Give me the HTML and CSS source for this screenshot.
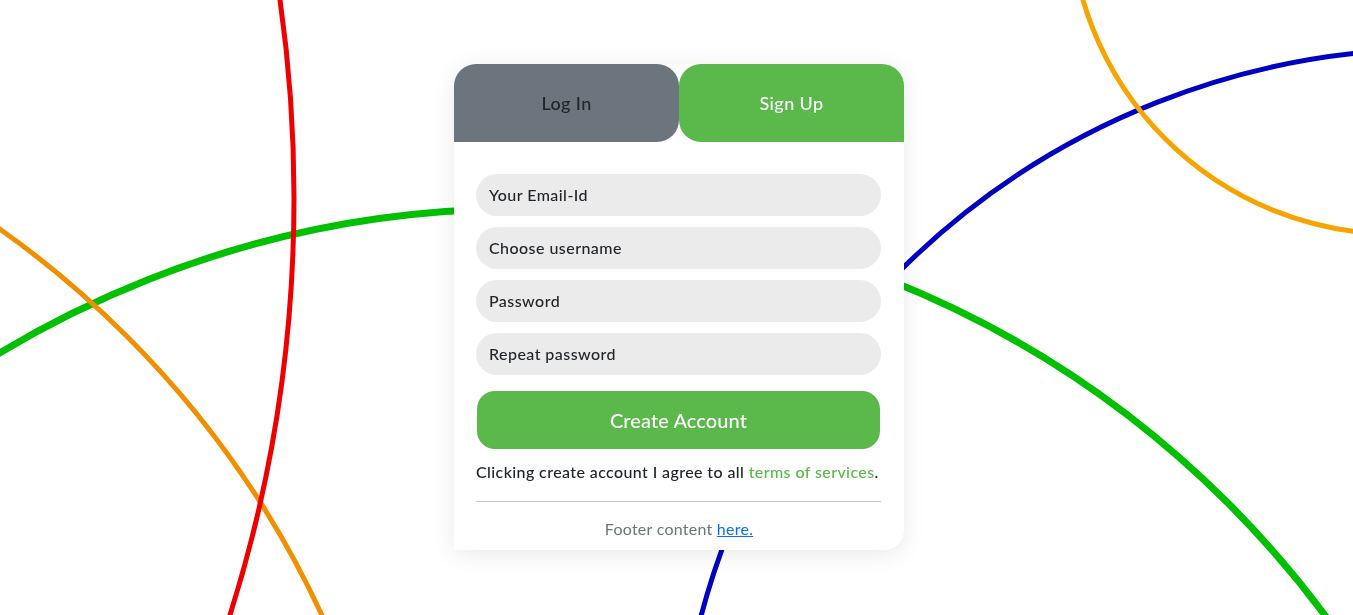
FILE: index.html
```html
<!DOCTYPE html>
<html lang="en">
<head>
<meta charset="utf-8">
<title>Sign Up</title>
<link rel="stylesheet" href="styles.css">
</head>
<body>
<svg class="bg" viewBox="0 0 1353 615" preserveAspectRatio="none" aria-hidden="true">
  <circle cx="518" cy="1213" r="1004" fill="none" stroke="#00c000" stroke-width="7"/>
  <circle cx="-560" cy="1024" r="972" fill="none" stroke="#f08f00" stroke-width="5"/>
  <circle cx="-1094" cy="198" r="1388" fill="none" stroke="#ee0000" stroke-width="5"/>
  <circle cx="1437" cy="810" r="761" fill="none" stroke="#0000c4" stroke-width="5"/>
  <circle cx="1395" cy="-91" r="325" fill="none" stroke="#f8a400" stroke-width="5"/>
</svg>
<main class="page">
  <section class="card">
    <div class="tabs">
      <button class="tab tab-login" type="button">Log In</button>
      <button class="tab tab-signup" type="button">Sign Up</button>
    </div>
    <form class="form">
      <input class="field" type="email" placeholder="Your Email-Id">
      <input class="field" type="text" placeholder="Choose username">
      <input class="field" type="password" placeholder="Password">
      <input class="field" type="password" placeholder="Repeat password">
      <button class="submit" type="button">Create Account</button>
      <p class="terms">Clicking create account I agree to all <a class="terms-link" href="#">terms of services</a>.</p>
    </form>
    <hr class="rule">
    <p class="footer">Footer content <a class="footer-link" href="#">here.</a></p>
  </section>
</main>
</body>
</html>
```

FILE: styles.css
```css
* { box-sizing: border-box; }

html, body {
  margin: 0;
  height: 100%;
  background: #ffffff;
}

body {
  font-family: "Lato", "Noto Sans", sans-serif;
  color: #212529;
  overflow: hidden;
}

.bg {
  position: fixed;
  left: 0;
  top: 0;
  width: 100%;
  height: 100%;
  z-index: 0;
}

.page {
  position: relative;
  z-index: 1;
  height: 100%;
  display: flex;
  align-items: flex-start;
  justify-content: center;
  padding: 64px 0 0 5px;
}

.card {
  width: 450px;
  background: #ffffff;
  border-radius: 22px 22px 20px 0;
  box-shadow: 0 4px 24px rgba(0, 0, 0, 0.09);
}

.tabs {
  display: grid;
  grid-template-columns: 1fr 1fr;
  height: 78px;
}

.tab {
  border: 0;
  font-family: inherit;
  font-size: 18px;
  font-weight: 500;
  letter-spacing: 0.4px;
  cursor: pointer;
  padding: 0 0 1px;
}

.tab-login {
  background: #6c757d;
  color: #212529;
  border-radius: 22px 22px 22px 0;
}

.tab-signup {
  background: #5bb84a;
  color: #ffffff;
  border-radius: 22px 22px 0 22px;
}

.form {
  display: flex;
  flex-direction: column;
  gap: 11px;
  padding: 32px 23px 0 22px;
  margin: 0;
}

.field {
  height: 42px;
  border: 0;
  border-radius: 21px;
  background: #ebebeb;
  padding: 0 13px 1px;
  font-family: inherit;
  font-size: 16px;
  font-weight: 500;
  letter-spacing: 0.45px;
  color: #212529;
  outline: none;
}

.field::placeholder {
  color: #212529;
  opacity: 1;
}

.submit {
  margin: 5px 1px 0;
  height: 58px;
  border: 0;
  border-radius: 18px;
  background: #5bb84a;
  color: #ffffff;
  font-family: inherit;
  font-size: 20px;
  font-weight: 500;
  letter-spacing: 0.1px;
  cursor: pointer;
}

.terms {
  margin: 0;
  font-size: 16px;
  line-height: 24px;
  font-weight: 500;
  letter-spacing: 0.4px;
  color: #212529;
}

.terms-link {
  color: #5bb84a;
  text-decoration: none;
}

.rule {
  margin: 17px 23px 0 22px;
  border: 0;
  border-top: 1px solid #c8c8c8;
}

.footer {
  margin: 0;
  padding: 15px 0 9px;
  text-align: center;
  font-size: 16px;
  line-height: 24px;
  letter-spacing: 0.25px;
  color: #6c757d;
}

.footer-link {
  color: #0d6efd;
  text-decoration: underline;
}
```
